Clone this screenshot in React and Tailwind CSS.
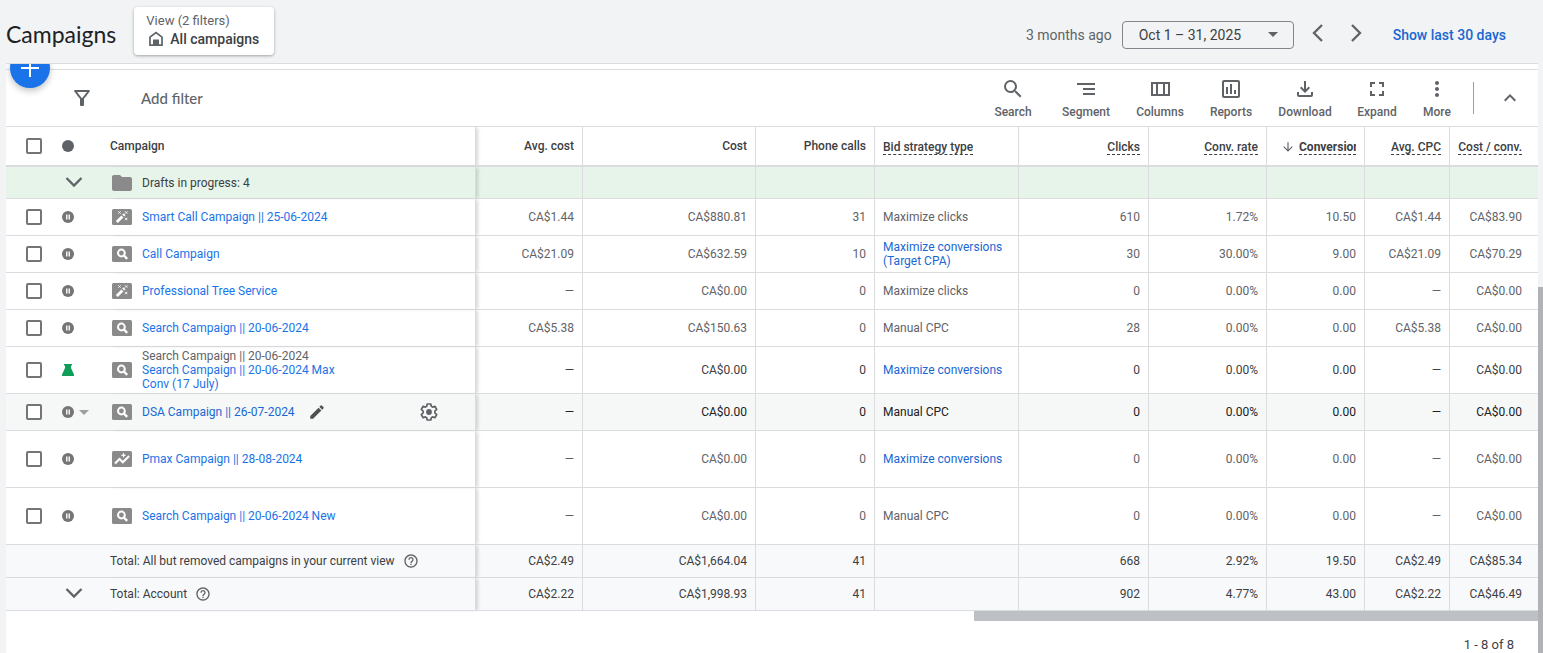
import React from "react";
import {
  MdOutlineFilterAlt,
  MdSearch,
  MdMoreVert,
  MdKeyboardArrowUp,
  MdFolder,
  MdModeEdit,
  MdHelpOutline,
  MdArrowDownward,
} from "react-icons/md";

const BORDER = "border-[#dadce0]";

const TOOLS = [
  { label: "Search", icon: <MdSearch className="size-6" />, width: "w-[72px]" },
  { label: "Segment", icon: <SegmentIcon />, width: "w-[74px]" },
  { label: "Columns", icon: <ColumnsIcon />, width: "w-[74px]" },
  { label: "Reports", icon: <ReportsIcon />, width: "w-[68px]" },
  { label: "Download", icon: <DownloadIcon />, width: "w-20" },
  { label: "Expand", icon: <ExpandIcon />, width: "w-16" },
  { label: "More", icon: <MdMoreVert className="size-6" />, width: "w-14" },
];

const COLUMNS = [
  { label: "Avg. cost", width: "w-[107px]" },
  { label: "Cost", width: "w-[173px]" },
  { label: "Phone calls", width: "w-[119px]" },
  { label: "Bid strategy type", width: "w-36", dashed: true, left: true },
  { label: "Clicks", width: "w-[130px]", dashed: true },
  { label: "Conv. rate", width: "w-[118px]", dashed: true },
  { label: "Conversions", width: "w-[98px]", dashed: true, sorted: true },
  { label: "Avg. CPC", width: "w-[85px]", dashed: true },
  { label: "Cost / conv.", width: "w-[88px]", dashed: true },
];

const BID_INDEX = 3;

const ROWS = [
  { type: "smart", name: "Smart Call Campaign || 25-06-2024", height: "h-[37px]", cells: ["CA$1.44", "CA$880.81", "31", "Maximize clicks", "610", "1.72%", "10.50", "CA$1.44", "CA$83.90"] },
  { type: "search", name: "Call Campaign", height: "h-[37px]", bidLink: true, cells: ["CA$21.09", "CA$632.59", "10", "Maximize conversions (Target CPA)", "30", "30.00%", "9.00", "CA$21.09", "CA$70.29"] },
  { type: "smart", name: "Professional Tree Service", height: "h-[37px]", cells: ["—", "CA$0.00", "0", "Maximize clicks", "0", "0.00%", "0.00", "—", "CA$0.00"] },
  { type: "search", name: "Search Campaign || 20-06-2024", height: "h-[37px]", cells: ["CA$5.38", "CA$150.63", "0", "Manual CPC", "28", "0.00%", "0.00", "CA$5.38", "CA$0.00"] },
  { type: "search", parent: "Search Campaign || 20-06-2024", name: "Search Campaign || 20-06-2024 Max Conv (17 July)", height: "h-[47px]", bidLink: true, experiment: true, cells: ["—", "CA$0.00", "0", "Maximize conversions", "0", "0.00%", "0.00", "—", "CA$0.00"] },
  { type: "search", name: "DSA Campaign || 26-07-2024", height: "h-[37px]", active: true, cells: ["—", "CA$0.00", "0", "Manual CPC", "0", "0.00%", "0.00", "—", "CA$0.00"] },
  { type: "pmax", name: "Pmax Campaign || 28-08-2024", height: "h-[57px]", bidLink: true, cells: ["—", "CA$0.00", "0", "Maximize conversions", "0", "0.00%", "0.00", "—", "CA$0.00"] },
  { type: "search", name: "Search Campaign || 20-06-2024 New", height: "h-[57px]", cells: ["—", "CA$0.00", "0", "Manual CPC", "0", "0.00%", "0.00", "—", "CA$0.00"] },
];

const TOTALS = [
  { label: "Total: All but removed campaigns in your current view", cells: ["CA$2.49", "CA$1,664.04", "41", "", "668", "2.92%", "19.50", "CA$2.49", "CA$85.34"] },
  { label: "Total: Account", expandable: true, cells: ["CA$2.22", "CA$1,998.93", "41", "", "902", "4.77%", "43.00", "CA$2.22", "CA$46.49"] },
];

function HomeIcon() {
  return (
    <svg viewBox="0 0 16 16" className="size-4" fill="none" aria-hidden="true">
      <path d="M2 14.2V6.2L8 1.6l6 4.6v8z" stroke="#5f6368" strokeWidth="1.7" />
      <path d="M5 8.500h6v6.500H5z" fill="#5f6368" />
    </svg>
  );
}

function SegmentIcon() {
  return (
    <svg viewBox="0 0 24 24" className="size-6" fill="currentColor" aria-hidden="true">
      <path d="M3 6h18v2H3zM9 11h12v2H9zM9 16h12v2H9z" />
    </svg>
  );
}

function ColumnsIcon() {
  return (
    <svg viewBox="0 0 24 24" className="size-6" fill="currentColor" aria-hidden="true">
      <path fillRule="evenodd" d="M3 5h19v14H3zM5 7v10h3V7zM10 7v10h5V7zM17 7v10h3V7z" />
    </svg>
  );
}

function ReportsIcon() {
  return (
    <svg viewBox="0 0 24 24" className="size-6" fill="currentColor" aria-hidden="true">
      <path fillRule="evenodd" d="M5 3h14a2 2 0 0 1 2 2v14a2 2 0 0 1-2 2H5a2 2 0 0 1-2-2V5a2 2 0 0 1 2-2zM5 5v14h14V5z" />
      <path d="M7 10h2v7H7zM11 7h2v10h-2zM15 13h2v4h-2z" />
    </svg>
  );
}

function DownloadIcon() {
  return (
    <svg viewBox="0 0 24 24" className="size-6" fill="currentColor" aria-hidden="true">
      <path d="M12 16l-5-5 1.4-1.4 2.6 2.6V4h2v8.200l2.600-2.600L17 11z" />
      <path d="M4 15h2v3h12v-3h2v3a2 2 0 0 1-2 2H6a2 2 0 0 1-2-2z" />
    </svg>
  );
}

function ExpandIcon() {
  return (
    <svg viewBox="0 0 24 24" className="size-6" fill="currentColor" aria-hidden="true">
      <path d="M5 5h5v2H7v3H5zM14 5h5v5h-2V7h-3zM5 14h2v3h3v2H5zM17 14h2v5h-5v-2h3z" />
    </svg>
  );
}

function GearIcon() {
  return (
    <svg viewBox="0 0 20 20" className="size-5" aria-hidden="true">
      <path
        d="M8.200 2h3.600l.5 2.300 1.300.8 2.300-.8 1.800 3.100-1.800 1.700v1.800l1.800 1.700-1.800 3.100-2.300-.8-1.300.8-.5 2.300H8.200l-.5-2.300-1.300-.8-2.300.8-1.800-3.100 1.800-1.700V9.100L2.300 7.400l1.800-3.100 2.300.8 1.300-.8z"
        fill="none"
        stroke="#5f6368"
        strokeWidth="1.700"
        strokeLinejoin="round"
      />
      <circle cx="10" cy="10" r="2.900" fill="#5f6368" />
    </svg>
  );
}

function Chevron({ d, className }) {
  return (
    <svg viewBox="0 0 24 24" className={className} fill="none" stroke="currentColor" strokeWidth="2.3" aria-hidden="true">
      <path d={d} />
    </svg>
  );
}

function DownChevron() {
  return <Chevron d="M4.500 7l7.500 7.500 7.500-7.500" className="size-6 text-[#5f6368]" />;
}

function PausedIcon() {
  return (
    <svg viewBox="0 0 12 12" className="size-3 shrink-0" role="img" aria-label="Paused">
      <circle cx="6" cy="6" r="6" fill="#757575" />
      <path d="M4 3.500h1.500v5H4zM6.500 3.500H8v5H6.500z" fill="#f5f5f5" />
    </svg>
  );
}

function FlaskIcon() {
  return (
    <svg viewBox="0 0 12 12" className="size-3 shrink-0" fill="#0f9d58" role="img" aria-label="Experiment">
      <path d="M2 0h8v1.500H9L9 4l3 6.500V12H0v-1.500L3 4V1.500H2z" />
    </svg>
  );
}

function CampaignTypeIcon({ type }) {
  return (
    <svg viewBox="0 0 20 16" className="h-4 w-5 shrink-0" aria-hidden="true">
      <rect width="20" height="16" rx="1.500" fill="#8a8a8a" />
      {type === "search" && (
        <g fill="none" stroke="#fff">
          <circle cx="9.400" cy="7" r="3.400" strokeWidth="2" />
          <path d="M11.900 9.500l3.300 3.300" strokeWidth="2.400" />
        </g>
      )}
      {type === "smart" && (
        <g fill="none" stroke="#fff">
          <path d="M4.800 13l5.600-5.600" strokeWidth="2.800" />
          <path d="M11.200 6.600l1.300-1.300" strokeWidth="2.800" />
          <path d="M6.300 2.300l2.400 2.400M8.700 2.300L6.300 4.700M13 2.300l2.400 2.400M15.400 2.300L13 4.700M13 8.800l2.400 2.400M15.400 8.800L13 11.200" strokeWidth="0.900" />
        </g>
      )}
      {type === "pmax" && (
        <g>
          <path d="M3 12.500l4.500-4.500 3.300 3.300L17.200 5" fill="none" stroke="#fff" strokeWidth="2" />
          <path d="M11.500 1.500l.8 2 2 .8-2 .8-.8 2-.8-2-2-.8 2-.8z" fill="#fff" />
        </g>
      )}
    </svg>
  );
}

function Checkbox({ label }) {
  return (
    <input
      type="checkbox"
      aria-label={label}
      className="block size-4 appearance-none rounded-xs border-2 border-[#757575] bg-white"
    />
  );
}

function Header() {
  return (
    <header className="flex h-16 items-center border-b border-[#dadce0] bg-[#f1f3f4] pr-8">
      <h1 className="pt-1.5 font-[Lato,sans-serif] text-[23px] text-[#202124]">Campaigns</h1>
      <div className="ml-4 pb-0.5 pl-0.5">
        <button type="button" className="flex h-12 min-w-[140px] flex-col justify-center rounded bg-white px-3 text-left shadow-[0_1px_3px_rgba(60,64,67,0.45)]">
          <span className="text-[13px] leading-4 text-[#5f6368]">View (2 filters)</span>
          <span className="flex items-center gap-1.5 pl-0.5 text-sm leading-5 font-medium text-[#3c4043]">
            <HomeIcon />
            All campaigns
          </span>
        </button>
      </div>
      <div className="ml-auto flex items-center pt-1.5">
        <span className="text-sm text-[#5f6368]">3 months ago</span>
        <button type="button" className="ml-2.5 flex h-7 w-43 items-center justify-between rounded border border-[#80868b] pr-[15px] pl-4 text-sm text-[#3c4043]">
          Oct 1 – 31, 2025
          <svg viewBox="0 0 10 5" className="h-[5px] w-2.5" fill="#5f6368" aria-hidden="true">
            <path d="M0 0h10L5 5z" />
          </svg>
        </button>
        <button type="button" aria-label="Previous period" className="ml-3 pb-1">
          <Chevron d="M16 4l-8 8 8 8" className="size-6 text-[#5f6368]" />
        </button>
        <button type="button" aria-label="Next period" className="ml-3.5 pb-1">
          <Chevron d="M8 4l8 8-8 8" className="size-6 text-[#5f6368]" />
        </button>
        <a href="#last-30-days" className="ml-[25px] text-sm font-medium text-[#1967d2]">Show last 30 days</a>
      </div>
    </header>
  );
}

function Toolbar() {
  return (
    <div className="relative overflow-hidden pt-[5px]">
      <div className={`flex h-[58px] items-center border-y ${BORDER} pr-4 pl-16`}>
        <MdOutlineFilterAlt className="size-6 text-[#5f6368]" aria-hidden="true" />
        <button type="button" className="ml-[47px] font-[Lato,sans-serif] text-[15px] font-medium text-[#5f6368]">Add filter</button>
        <div className="ml-auto flex items-center">
          {TOOLS.map((tool) => (
            <button key={tool.label} type="button" className={`flex ${tool.width} flex-col items-center gap-[3px] text-xs leading-4 font-medium text-[#5f6368]`}>
              {tool.icon}
              {tool.label}
            </button>
          ))}
          <span className="ml-2 h-8 w-px bg-[#9aa0a6]" />
          <button type="button" aria-label="Collapse" className="ml-6">
            <MdKeyboardArrowUp className="size-6 text-[#5f6368]" />
          </button>
        </div>
      </div>
      <button type="button" aria-label="New campaign" className="absolute -top-4 left-1 flex size-10 items-center justify-center rounded-full bg-[#1a73e8] shadow-[0_3px_6px_rgba(60,64,67,0.3)]">
        <svg viewBox="0 0 18 18" className="size-[18px]" fill="#fff" aria-hidden="true">
          <path d="M8 0h2v8h8v2h-8v8H8v-8H0V8h8z" />
        </svg>
      </button>
    </div>
  );
}

function ColumnHeader({ column, last }) {
  return (
    <th scope="col" className={`border-b-2 ${BORDER} ${last ? "pr-4" : "border-r pr-2"} ${column.left ? "pl-2 text-left" : "text-right"} font-medium text-[#3c4043]`}>
      <span className={`flex items-center ${column.left ? "" : "justify-end"} ${column.dashed ? "pt-0.5" : ""}`}>
        {column.sorted && <MdArrowDownward className="mr-1 ml-3.5 size-3.5 shrink-0 text-[#5f6368]" aria-label="Sorted descending" />}
        <span className={`overflow-hidden whitespace-nowrap ${column.dashed ? "border-b border-dashed border-[#3c4043]" : ""} ${column.sorted ? "font-bold" : ""}`}>
          {column.label}
        </span>
      </span>
    </th>
  );
}

function MetricCells({ cells, bidLink, tone }) {
  return cells.map((value, i) => (
    <td key={COLUMNS[i].label} className={`border-b ${BORDER} ${i === cells.length - 1 ? "pr-4" : "border-r pr-2"} ${i === BID_INDEX ? "pl-2 text-left" : "text-right"} ${tone}`}>
      {i === BID_INDEX && bidLink ? <a href="#strategy" className="text-[#1967d2]">{value}</a> : value}
    </td>
  ));
}

function rowTone(row) {
  if (row.active) return "text-[#202124]";
  return row.experiment ? "text-[#3c4043]" : "text-[#5f6368]";
}

function CampaignRow({ row }) {
  const line = `border-b ${BORDER}`;
  return (
    <tr className={`${row.height} ${row.active ? "bg-[#f6f8f7]" : ""}`}>
      <td className={`${line} pl-5`}><Checkbox label={`Select ${row.name}`} /></td>
      <td className={line}>
        <span className="flex items-center gap-[5px]">
          {row.experiment ? <FlaskIcon /> : <PausedIcon />}
          {row.active && (
            <svg viewBox="0 0 10 5" className="h-[5px] w-2.5" fill="#9e9e9e" aria-hidden="true">
              <path d="M0 0h10L5 5z" />
            </svg>
          )}
        </span>
      </td>
      <td className={`${line} border-r pl-0.5 shadow-[3px_0_3px_-1px_rgba(60,64,67,0.2)]`}>
        <div className="flex items-center gap-2.5 pr-9">
          <CampaignTypeIcon type={row.type} />
          <div className="max-w-52">
            {row.parent && <div className="text-[#5f6368]">{row.parent}</div>}
            <a href="#campaign" className={row.active ? "text-[#1967d2]" : "text-[#1a73e8]"}>{row.name}</a>
          </div>
          {row.active && (
            <>
              <button type="button" aria-label="Edit name" className="ml-[3px]">
                <MdModeEdit className="size-[18px] text-[#505050]" />
              </button>
              <button type="button" aria-label="Settings" className="ml-auto">
                <GearIcon />
              </button>
            </>
          )}
        </div>
      </td>
      <MetricCells cells={row.cells} bidLink={row.bidLink} tone={rowTone(row)} />
    </tr>
  );
}

function CampaignTable() {
  const line = `border-b ${BORDER}`;
  const edge = "border-r shadow-[3px_0_3px_-1px_rgba(60,64,67,0.2)]";
  return (
    <table className="w-full table-fixed border-separate border-spacing-0 text-xs leading-[14px]">
      <colgroup>
        <col className="w-14" />
        <col className="w-12" />
        <col />
        {COLUMNS.map((column) => <col key={column.label} className={column.width} />)}
      </colgroup>
      <thead>
        <tr className="h-10">
          <th className={`border-b-2 ${BORDER} pl-5`}><Checkbox label="Select all campaigns" /></th>
          <th className={`border-b-2 ${BORDER}`}>
            <span role="img" aria-label="Status" className="block size-3 rounded-full bg-[#5f6368]" />
          </th>
          <th scope="col" className={`border-b-2 ${BORDER} ${edge} text-left font-medium text-[#3c4043]`}>Campaign</th>
          {COLUMNS.map((column, i) => <ColumnHeader key={column.label} column={column} last={i === COLUMNS.length - 1} />)}
        </tr>
      </thead>
      <tbody>
        <tr className="h-8 bg-[#e6f4ea] text-[#3c4043]">
          <td className={line} />
          <td className={line}>
            <button type="button" aria-label="Expand drafts" className="block"><DownChevron /></button>
          </td>
          <td className={`${line} ${edge}`}>
            <span className="flex items-center gap-2">
              <MdFolder className="size-6 text-[#8a8a8a]" aria-hidden="true" />
              Drafts in progress: 4
            </span>
          </td>
          {COLUMNS.map((column, i) => (
            <td key={column.label} className={`${line} ${i === COLUMNS.length - 1 ? "" : "border-r"}`} />
          ))}
        </tr>
        {ROWS.map((row) => <CampaignRow key={row.name} row={row} />)}
      </tbody>
      <tfoot>
        {TOTALS.map((total) => (
          <tr key={total.label} className="h-[33px] bg-[#f8f9fa] text-[#3c4043]">
            <td className={line} />
            <td className={line}>
              {total.expandable && <button type="button" aria-label="Expand account totals" className="block"><DownChevron /></button>}
            </td>
            <td className={`${line} ${edge}`}>
              <span className="flex items-center gap-2">
                {total.label}
                <MdHelpOutline className="size-4 text-[#5f6368]" aria-label="Help" />
              </span>
            </td>
            <MetricCells cells={total.cells} tone="text-[#3c4043]" />
          </tr>
        ))}
      </tfoot>
    </table>
  );
}

export default function App() {
  return (
    <div className="relative flex min-h-screen flex-col overflow-hidden bg-[#f1f3f4] pr-[5px] pl-1.5 font-[Roboto,sans-serif]">
      <Header />
      <main className="flex-1 bg-white">
        <Toolbar />
        <CampaignTable />
        <div className="ml-auto h-2.5 w-[36.8%] bg-[#bdc1c6]" />
        <p className="pt-4 pr-6 text-right text-[13px] leading-4 text-[#3c4043]">1 - 8 of 8</p>
      </main>
      <div className="absolute top-[44%] right-0 bottom-0 w-[5px] bg-[#b0b2b5]" />
    </div>
  );
}
